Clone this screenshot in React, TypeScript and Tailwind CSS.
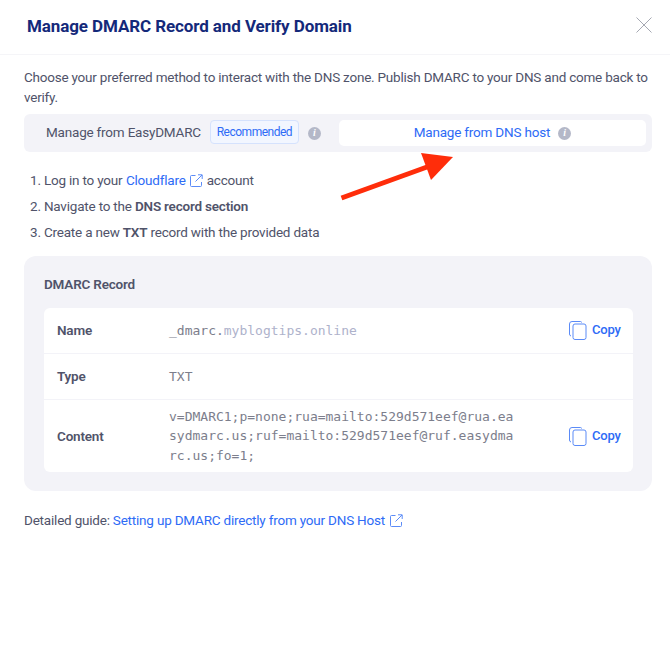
import React from 'react';

const InfoDot = () => (
  <span className="flex h-[13px] w-[13px] shrink-0 items-center justify-center rounded-full bg-[#b4b8c8] font-['Liberation_Serif',serif] text-[10px] font-bold italic leading-none text-white">
    i
  </span>
);

const ExternalIcon = () => (
  <svg width="13" height="13" viewBox="0 0 13 13" fill="none" stroke="#5b8bf7" strokeWidth="1" className="inline-block">
    <path d="M5.500 1.500H1.500a1 1 0 0 0-1 1v9a1 1 0 0 0 1 1h9a1 1 0 0 0 1-1V8" />
    <path d="M5.500 7.500 12 1M8 .8h4.200V5" />
  </svg>
);

const CopyButton = () => (
  <div className="flex items-center gap-[5px] text-[#2e6bf6]">
    <svg width="18" height="19" viewBox="0 0 18 19" fill="none" stroke="#5b8bf7" strokeWidth="1">
      <path d="M12.500 1.500a1 1 0 0 0-1-1H3a2.500 2.500 0 0 0-2.500 2.500v10a2 2 0 0 0 1.500 2" />
      <rect x="4" y="3" width="13" height="15.500" rx="2" />
    </svg>
    <span className="-mt-[1px] w-[28px] text-[13px] font-medium tracking-[-0.2px]">Copy</span>
  </div>
);

export default function App() {
  return (
    <div className="relative h-[646px] w-[670px] overflow-hidden bg-white font-['Roboto',sans-serif] text-[13.500px] tracking-[-0.2px] text-[#50536a]">
      {/* Header */}
      <div className="flex h-[55px] items-center justify-between border-b border-[#f5f5f8] pl-[27px] pr-[18px]">
        <h1 className="text-[17px] font-bold tracking-[-0.1px] text-[#14297a]">
          Manage DMARC Record and Verify Domain
        </h1>
        <svg width="16" height="16" viewBox="0 0 16 16" stroke="#a5a8b2" strokeWidth="1" className="-mt-[4px]">
          <path d="M.5.500l15 15M15.500.500l-15 15" />
        </svg>
      </div>

      <div className="px-[24px]">
        <p className="mt-[12px] w-[628px] leading-[20px] tracking-[-0.22px]">
          Choose your preferred method to interact with the DNS zone. Publish DMARC to your DNS and come back to verify.
        </p>

        {/* Method tabs */}
        <div className="mt-[7px] flex h-[38px] w-[628px] items-center rounded-[6px] bg-[#f3f3f8] pl-[22px] pr-[6px]">
          <span className="-mt-[1px]">Manage from EasyDMARC</span>
          <span className="ml-[9px] flex h-[24px] w-[89px] -translate-y-px items-center justify-center rounded-[4px] border border-[#d5e2fd] bg-[#f2f6ff] text-[12px] tracking-[-0.5px] text-[#2e6bf6]">
            Recommended
          </span>
          <span className="ml-[9px]">
            <InfoDot />
          </span>
          <div className="ml-[18px] flex h-[26px] flex-1 items-center justify-center gap-[8px] rounded-[5px] bg-white text-[#2e6bf6]">
            <span className="-mt-[1px]">Manage from DNS host</span>
            <InfoDot />
          </div>
        </div>

        {/* Steps */}
        <ol className="mt-[18px] flex flex-col gap-[6px] pl-[6px]">
          <li className="flex h-[20px] items-center gap-[3.500px]">
            1. Log in to your <span className="text-[#2e6bf6]">Cloudflare</span>
            <span className="ml-[1px] flex"><ExternalIcon /></span> account
          </li>
          <li className="h-[20px] leading-[20px]">
            2. Navigate to the <b className="font-semibold">DNS record section</b>
          </li>
          <li className="h-[20px] leading-[20px]">
            3. Create a new <b className="font-semibold">TXT</b> record with the provided data
          </li>
        </ol>

        {/* Record card */}
        <div className="mt-[14px] h-[235px] w-[628px] rounded-[12px] bg-[#f3f3f8] px-[20px] pt-[18px]">
          <h2 className="font-semibold leading-[20px]">DMARC Record</h2>
          <div className="mt-[14px] w-[589px] rounded-[6px] bg-white">
            <div className="flex h-[46px] items-center border-b border-[#f3f3f8] px-[13px]">
              <span className="w-[112px] font-semibold">Name</span>
              <span className="flex-1 font-['DejaVu_Sans_Mono',monospace] text-[13px] tracking-normal text-[#7c7e8c]">
                _dmarc.<span className="text-[#aeb2cb]">myblogtips.online</span>
              </span>
              <CopyButton />
            </div>
            <div className="flex h-[46px] items-center border-b border-[#f3f3f8] px-[13px]">
              <span className="w-[112px] font-semibold">Type</span>
              <span className="flex-1 font-['DejaVu_Sans_Mono',monospace] text-[13px] tracking-normal text-[#7c7e8c]">TXT</span>
            </div>
            <div className="flex h-[72px] items-center px-[13px]">
              <span className="w-[112px] font-semibold">Content</span>
              <span className="w-[346px] break-all font-['DejaVu_Sans_Mono',monospace] text-[13px] leading-[19.500px] tracking-normal text-[#7c7e8c]">
                v=DMARC1;p=none;rua=mailto:529d571eef@rua.easydmarc.us;ruf=mailto:529d571eef@ruf.easydmarc.us;fo=1;
              </span>
              <span className="ml-auto">
                <CopyButton />
              </span>
            </div>
          </div>
        </div>

        {/* Guide link */}
        <p className="mt-[19px] flex items-center gap-[3px] leading-[20px]">
          Detailed guide:
          <span className="text-[#2e6bf6]">Setting up DMARC directly from your DNS Host</span>
          <span className="ml-[2px] flex"><ExternalIcon /></span>
        </p>
      </div>

      {/* Annotation arrow */}
      <svg width="120" height="55" viewBox="0 0 120 55" className="absolute left-[340px] top-[150px]">
        <path d="M1.500 48 87 17" stroke="#ff2d0a" strokeWidth="5" fill="none" />
        <path d="M81 3 113 7 91 30Z" fill="#ff2d0a" />
      </svg>
    </div>
  );
}
